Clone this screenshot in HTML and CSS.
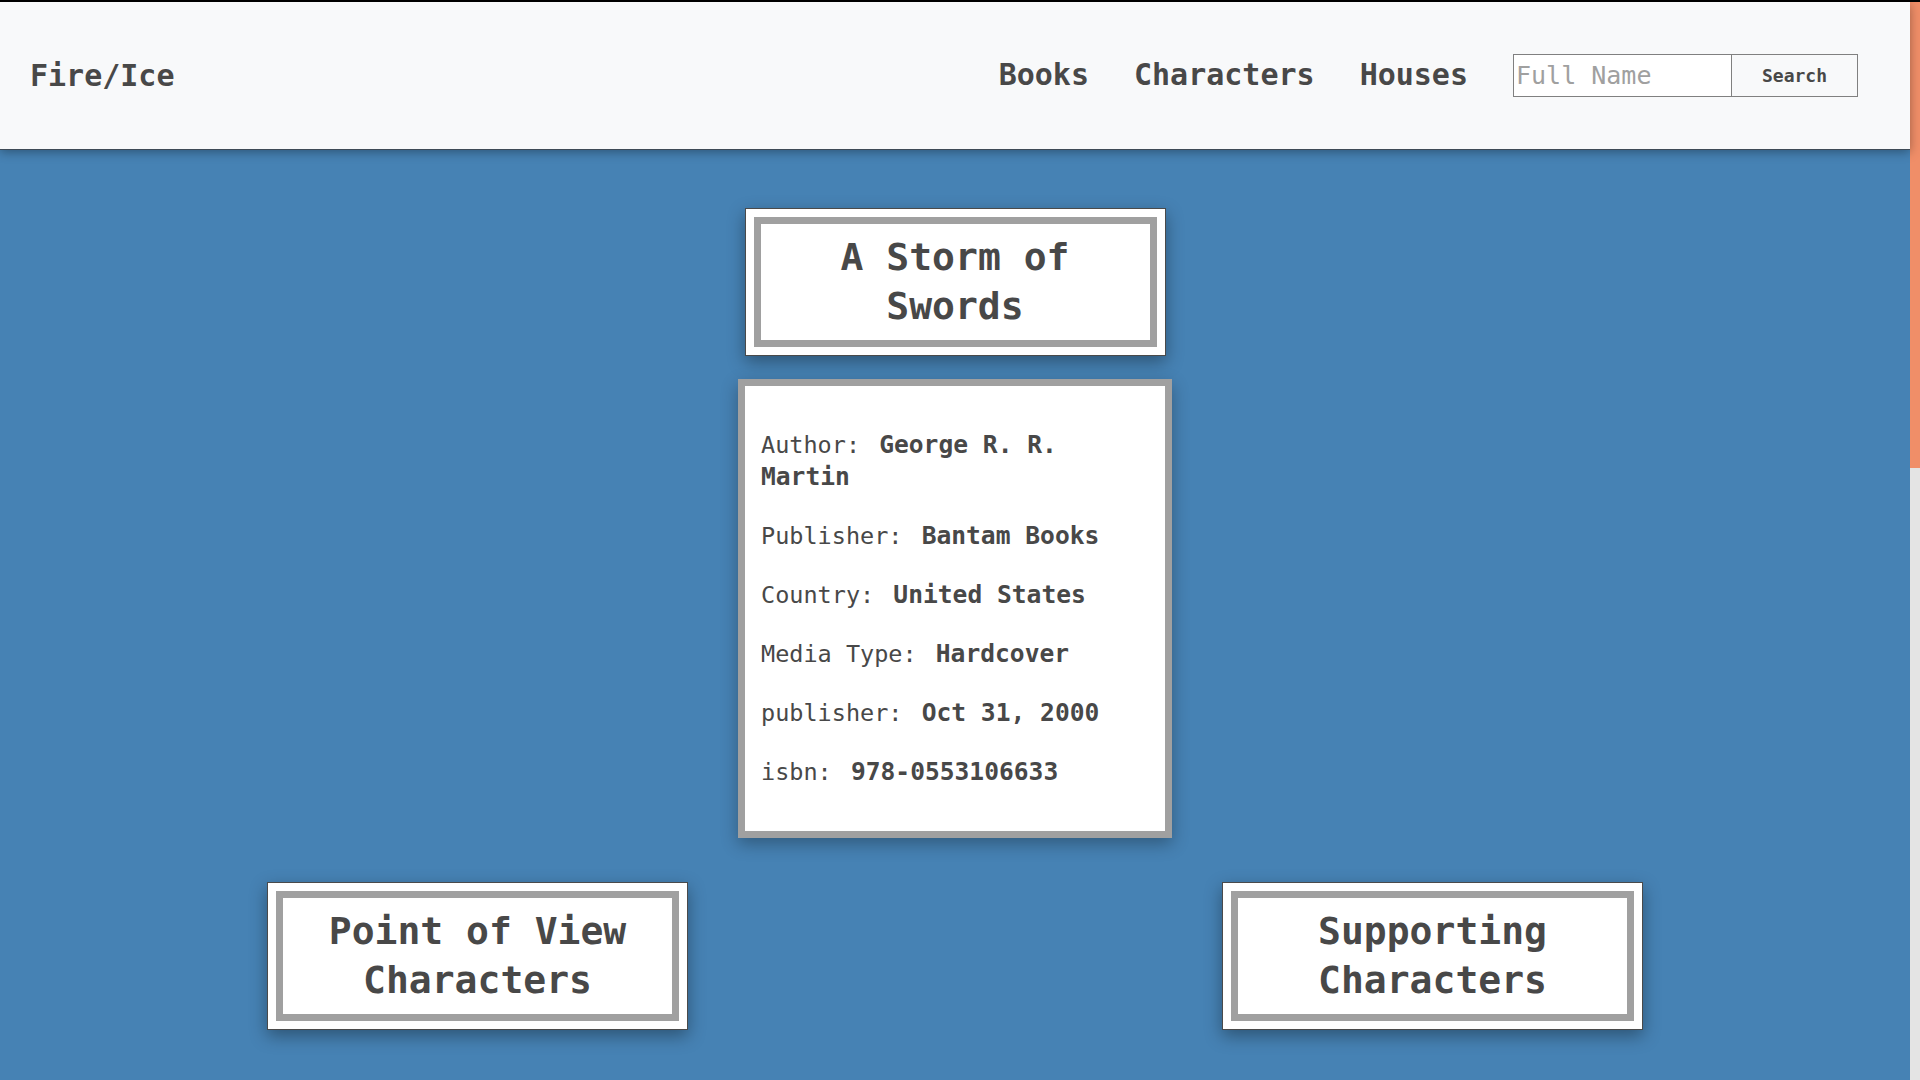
FILE: index.html
```html
<!DOCTYPE html>
<html lang="en">
<head>
<meta charset="utf-8">
<title>Fire/Ice - A Storm of Swords</title>
<link rel="stylesheet" href="styles.css">
</head>
<body>
<div class="page">
  <div class="main">
    <header class="topbar">
      <a class="brand" href="#">Fire/Ice</a>
      <nav class="nav">
        <a class="nav-link" href="#">Books</a>
        <a class="nav-link" href="#">Characters</a>
        <a class="nav-link" href="#">Houses</a>
        <form class="search">
          <input class="search-input" type="text" placeholder="Full Name">
          <button class="search-btn" type="button">Search</button>
        </form>
      </nav>
    </header>
    <main class="content">
      <div class="frame-card">
        <h1 class="frame-inner">A Storm of Swords</h1>
      </div>
      <section class="info-card">
        <p><span class="label">Author:</span> <b class="value">George R. R.</b> <b class="value-cont">Martin</b></p>
        <p><span class="label">Publisher:</span> <b class="value">Bantam Books</b></p>
        <p><span class="label">Country:</span> <b class="value">United States</b></p>
        <p><span class="label">Media Type:</span> <b class="value">Hardcover</b></p>
        <p><span class="label">publisher:</span> <b class="value">Oct 31, 2000</b></p>
        <p><span class="label">isbn:</span> <b class="value">978-0553106633</b></p>
      </section>
      <div class="related">
        <div class="frame-card">
          <h2 class="frame-inner">Point of View Characters</h2>
        </div>
        <div class="frame-card">
          <h2 class="frame-inner">Supporting Characters</h2>
        </div>
      </div>
    </main>
  </div>
  <div class="scrollbar"><div class="scroll-thumb"></div></div>
</div>
</body>
</html>
```
FILE: styles.css
```css
* { box-sizing: border-box; }
html, body { margin: 0; padding: 0; height: 100%; overflow: hidden; }
body {
  font-family: "DejaVu Sans Mono", "Liberation Mono", monospace;
  color: #484848;
  background: #4682b4;
}
.page {
  display: flex;
  height: 100vh;
  border-top: 2px solid #000;
}
.main {
  flex: 1;
  display: flex;
  flex-direction: column;
  min-width: 0;
}
.topbar {
  height: 147px;
  flex: none;
  background: #f8f9fa;
  display: flex;
  align-items: center;
  justify-content: space-between;
  padding: 0 52px 0 30px;
  position: relative;
  z-index: 2;
  box-shadow: 0 1px 0 #3e4a55, 0 3px 10px rgba(0, 0, 0, 0.35);
}
.brand {
  font-size: 30px;
  font-weight: bold;
  color: #484848;
  text-decoration: none;
}
.nav {
  display: flex;
  align-items: center;
  gap: 45px;
}
.nav-link {
  font-size: 30px;
  font-weight: bold;
  color: #484848;
  text-decoration: none;
  margin-top: -2px;
}
.search {
  display: flex;
  margin: 0;
}
.search-input {
  width: 218px;
  height: 43px;
  border: 1px solid #808080;
  border-right: none;
  background: #fff;
  padding: 0 2px;
  font-family: "DejaVu Sans Mono", monospace;
  font-size: 25px;
  color: #484848;
  outline: none;
}
.search-input::placeholder { color: #a0a0a0; }
.search-btn {
  width: 127px;
  height: 43px;
  border: 1px solid #808080;
  background: #f8f9fa;
  font-family: "DejaVu Sans Mono", monospace;
  font-size: 18px;
  font-weight: bold;
  color: #484848;
  padding: 0;
}
.content {
  flex: 1;
  display: flex;
  flex-direction: column;
  align-items: center;
  padding-top: 59px;
  background: #4682b4;
}
.frame-card {
  width: 421px;
  background: #fff;
  border: 1px solid #4a4a4a;
  padding: 8px;
  box-shadow: 0 6px 16px rgba(0, 0, 0, 0.35);
}
.frame-inner {
  margin: 0;
  border: 7px solid #a0a0a0;
  padding: 9px 8px 9px;
  text-align: center;
  font-size: 38px;
  font-weight: bold;
  line-height: 49px;
  color: #484848;
}
.info-card {
  width: 434px;
  margin-top: 23px;
  background: #fff;
  border: 7px solid #a0a0a0;
  padding: 16px;
  font-size: 23.5px;
  line-height: 32px;
  box-shadow: 0 6px 16px rgba(0, 0, 0, 0.3);
}
.info-card p { margin: 27px 0; }
.value { margin-left: 5px; font-weight: bold; font-size: 24.6px; }
.value-cont { font-weight: bold; font-size: 24.6px; }
.related {
  width: 100%;
  margin-top: 44px;
  display: grid;
  grid-template-columns: 1fr 1fr;
  justify-items: center;
}
.scrollbar {
  width: 10px;
  flex: none;
  background: #e4e4e4;
}
.scroll-thumb {
  height: 466px;
  background: #f08e68;
}
```
